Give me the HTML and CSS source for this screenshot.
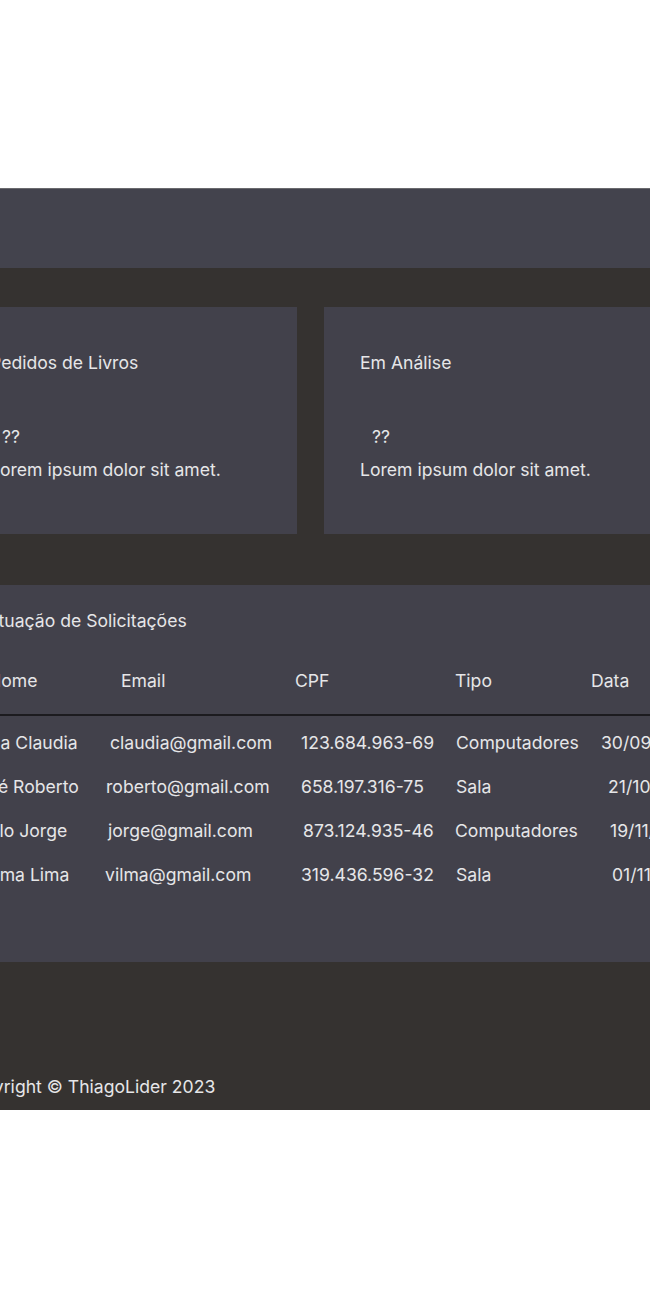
FILE: index.html
```html
<!DOCTYPE html>
<html lang="pt-BR">
<head>
<meta charset="utf-8">
<title>Painel</title>
<link rel="stylesheet" href="styles.css">
</head>
<body>
<div class="page">
  <header class="topbar"></header>
  <main class="main">
    <section class="cards">
      <div class="card">
        <h2 class="card-title">Pedidos de Livros</h2>
        <p class="card-count">??</p>
        <p class="card-text">Lorem ipsum dolor sit amet.</p>
      </div>
      <div class="card">
        <h2 class="card-title">Em Análise</h2>
        <p class="card-count">??</p>
        <p class="card-text">Lorem ipsum dolor sit amet.</p>
      </div>
    </section>
    <section class="requests">
      <h2 class="requests-title">Situação de Solicitações</h2>
      <div class="table">
        <div class="row head">
          <span class="h-nome">Nome</span>
          <span class="h-email">Email</span>
          <span class="h-cpf">CPF</span>
          <span class="h-tipo">Tipo</span>
          <span class="h-data">Data</span>
        </div>
        <div class="tbody">
          <div class="row">
            <span class="n1">Ana Claudia</span>
            <span class="d-email e1">claudia@gmail.com</span>
            <span>123.684.963-69</span>
            <span>Computadores</span>
            <span class="d-data">30/09/2023</span>
          </div>
          <div class="row">
            <span class="n2">José Roberto</span>
            <span class="d-email e2">roberto@gmail.com</span>
            <span>658.197.316-75</span>
            <span>Sala</span>
            <span class="d-data t2">21/10/2023</span>
          </div>
          <div class="row">
            <span class="n3">Paulo Jorge</span>
            <span class="d-email e3">jorge@gmail.com</span>
            <span class="c3">873.124.935-46</span>
            <span class="p3">Computadores</span>
            <span class="d-data t3">19/11/2023</span>
          </div>
          <div class="row">
            <span class="n4">Vilma Lima</span>
            <span class="d-email e4">vilma@gmail.com</span>
            <span>319.436.596-32</span>
            <span>Sala</span>
            <span class="d-data t4">01/11/2023</span>
          </div>
        </div>
      </div>
    </section>
  </main>
  <footer class="footer">Copyright © ThiagoLider 2023</footer>
</div>
</body>
</html>
```
FILE: styles.css
```css
html, body {
  overflow-x: hidden;
}
body {
  margin: 0;
  padding-top: 188px;
  background: #ffffff;
  font-family: Inter, "Noto Sans", sans-serif;
  font-size: 17.6px;
  line-height: 24px;
  color: #e6e6e8;
}
.page {
  width: 650px;
  overflow: hidden;
  background: #353230;
}
.topbar {
  height: 79px;
  border-top: 1px solid #6a6a6e;
  background: #43434d;
}
.main {
  margin-left: -46px;
  width: 713px;
  padding-top: 39px;
}
.cards {
  display: grid;
  grid-template-columns: 343px 343px;
  column-gap: 27px;
}
.card {
  background: #42414b;
  padding: 44px 36px 52px;
}
.card h2, .card p, .requests h2 {
  margin: 0;
  font-size: 17.6px;
  font-weight: 400;
}
.card-count {
  margin-top: 50px !important;
  padding-left: 12px;
}
.card-text {
  margin-top: 9px !important;
}
.requests {
  margin-top: 51px;
  background: #42414b;
  padding: 24px 0 65px 29px;
}
.requests-title {
  margin-bottom: 36px !important;
}
.row {
  display: grid;
  grid-template-columns: 128px 195px 155px 148px 120px;
  white-space: nowrap;
  margin-left: -5px;
}
.row.head {
  padding-bottom: 21px;
  border-bottom: 2px solid #1c1b1f;
  margin-right: -40px;
}
.tbody {
  padding-top: 5px;
}
.tbody .row {
  padding: 10px 0;
}
.h-nome { padding-left: 10px; }
.h-email { padding-left: 15px; }
.h-cpf { margin-left: -6px; }
.h-tipo { margin-left: -1px; }
.h-data { margin-left: -13px; }
.n1 { margin-left: 0; }
.n2 { margin-left: -10px; }
.n3 { margin-left: -10px; }
.n4 { margin-left: 1px; }
.e1 { padding-left: 4px; }
.e3 { padding-left: 2px; }
.e4 { margin-left: -1px; }
.c3 { padding-left: 2px; }
.p3 { margin-left: -1px; }
.d-data { margin-left: -3px; }
.t2 { margin-left: 4px; }
.t3 { margin-left: 6px; }
.t4 { margin-left: 8px; }
.footer {
  padding: 113px 0 11px;
  margin-left: -40px;
  white-space: nowrap;
}
```
